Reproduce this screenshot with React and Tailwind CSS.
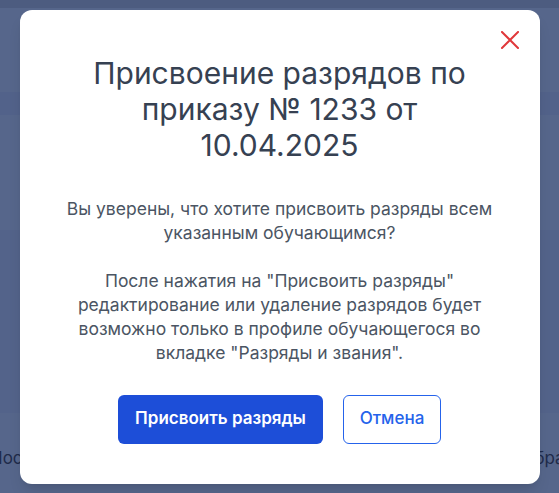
import React from 'react';

function Backdrop() {
  return (
    <div className="absolute inset-0 flex flex-col bg-[#56668b] overflow-hidden">
      <div className="h-2 bg-[#4d5c80]" />
      <div className="h-[84px]" />
      <div className="h-[23px] bg-[#52628a]" />
      <div className="h-[115px]" />
      <div className="h-[183px] bg-[#53638a]" />
      <div className="flex-1 flex items-center justify-between pt-3">
        <span className="-ml-[10px] text-[17px] text-[#1f2b4a]">Последний</span>
        <span className="-mr-[14px] text-[17px] text-[#1f2b4a]">образ</span>
      </div>
    </div>
  );
}

function CloseIcon() {
  return (
    <svg width="18" height="18" viewBox="0 0 18 18" fill="none">
      <path d="M1 1L17 17M17 1L1 17" stroke="#e0383b" strokeWidth="2" strokeLinecap="square" />
    </svg>
  );
}

export default function App() {
  return (
    <div className="relative w-[559px] h-[493px] overflow-hidden font-['Inter',sans-serif]">
      <Backdrop />
      <div className="absolute inset-0 flex items-center justify-center">
        <div className="relative w-[520px] rounded-xl bg-white px-10 pt-[45px] pb-10 shadow-lg">
          <button type="button" className="absolute right-[21px] top-[21px] p-0">
            <CloseIcon />
          </button>
          <h2 className="text-center text-3xl leading-9 text-[#364152]">
            Присвоение разрядов по приказу № 1233 от 10.04.2025
          </h2>
          <div className="mt-[34px] flex flex-col gap-6 text-center text-[17.5px] leading-6 text-[#4b5563]">
            <p>Вы уверены, что хотите присвоить разряды всем указанным обучающимся?</p>
            <p>
              После нажатия на "Присвоить разряды" редактирование или удаление разрядов будет
              возможно только в профиле обучающегося во вкладке "Разряды и звания".
            </p>
          </div>
          <div className="mt-[30px] flex justify-center gap-5">
            <button
              type="button"
              className="h-[49px] w-[205px] rounded-md bg-[#1d4ed8] text-[17px] font-semibold text-white"
            >
              Присвоить разряды
            </button>
            <button
              type="button"
              className="h-[49px] w-[98px] rounded-md border border-[#2563eb] bg-white text-[17px] font-medium text-[#2563eb]"
            >
              Отмена
            </button>
          </div>
        </div>
      </div>
    </div>
  );
}
